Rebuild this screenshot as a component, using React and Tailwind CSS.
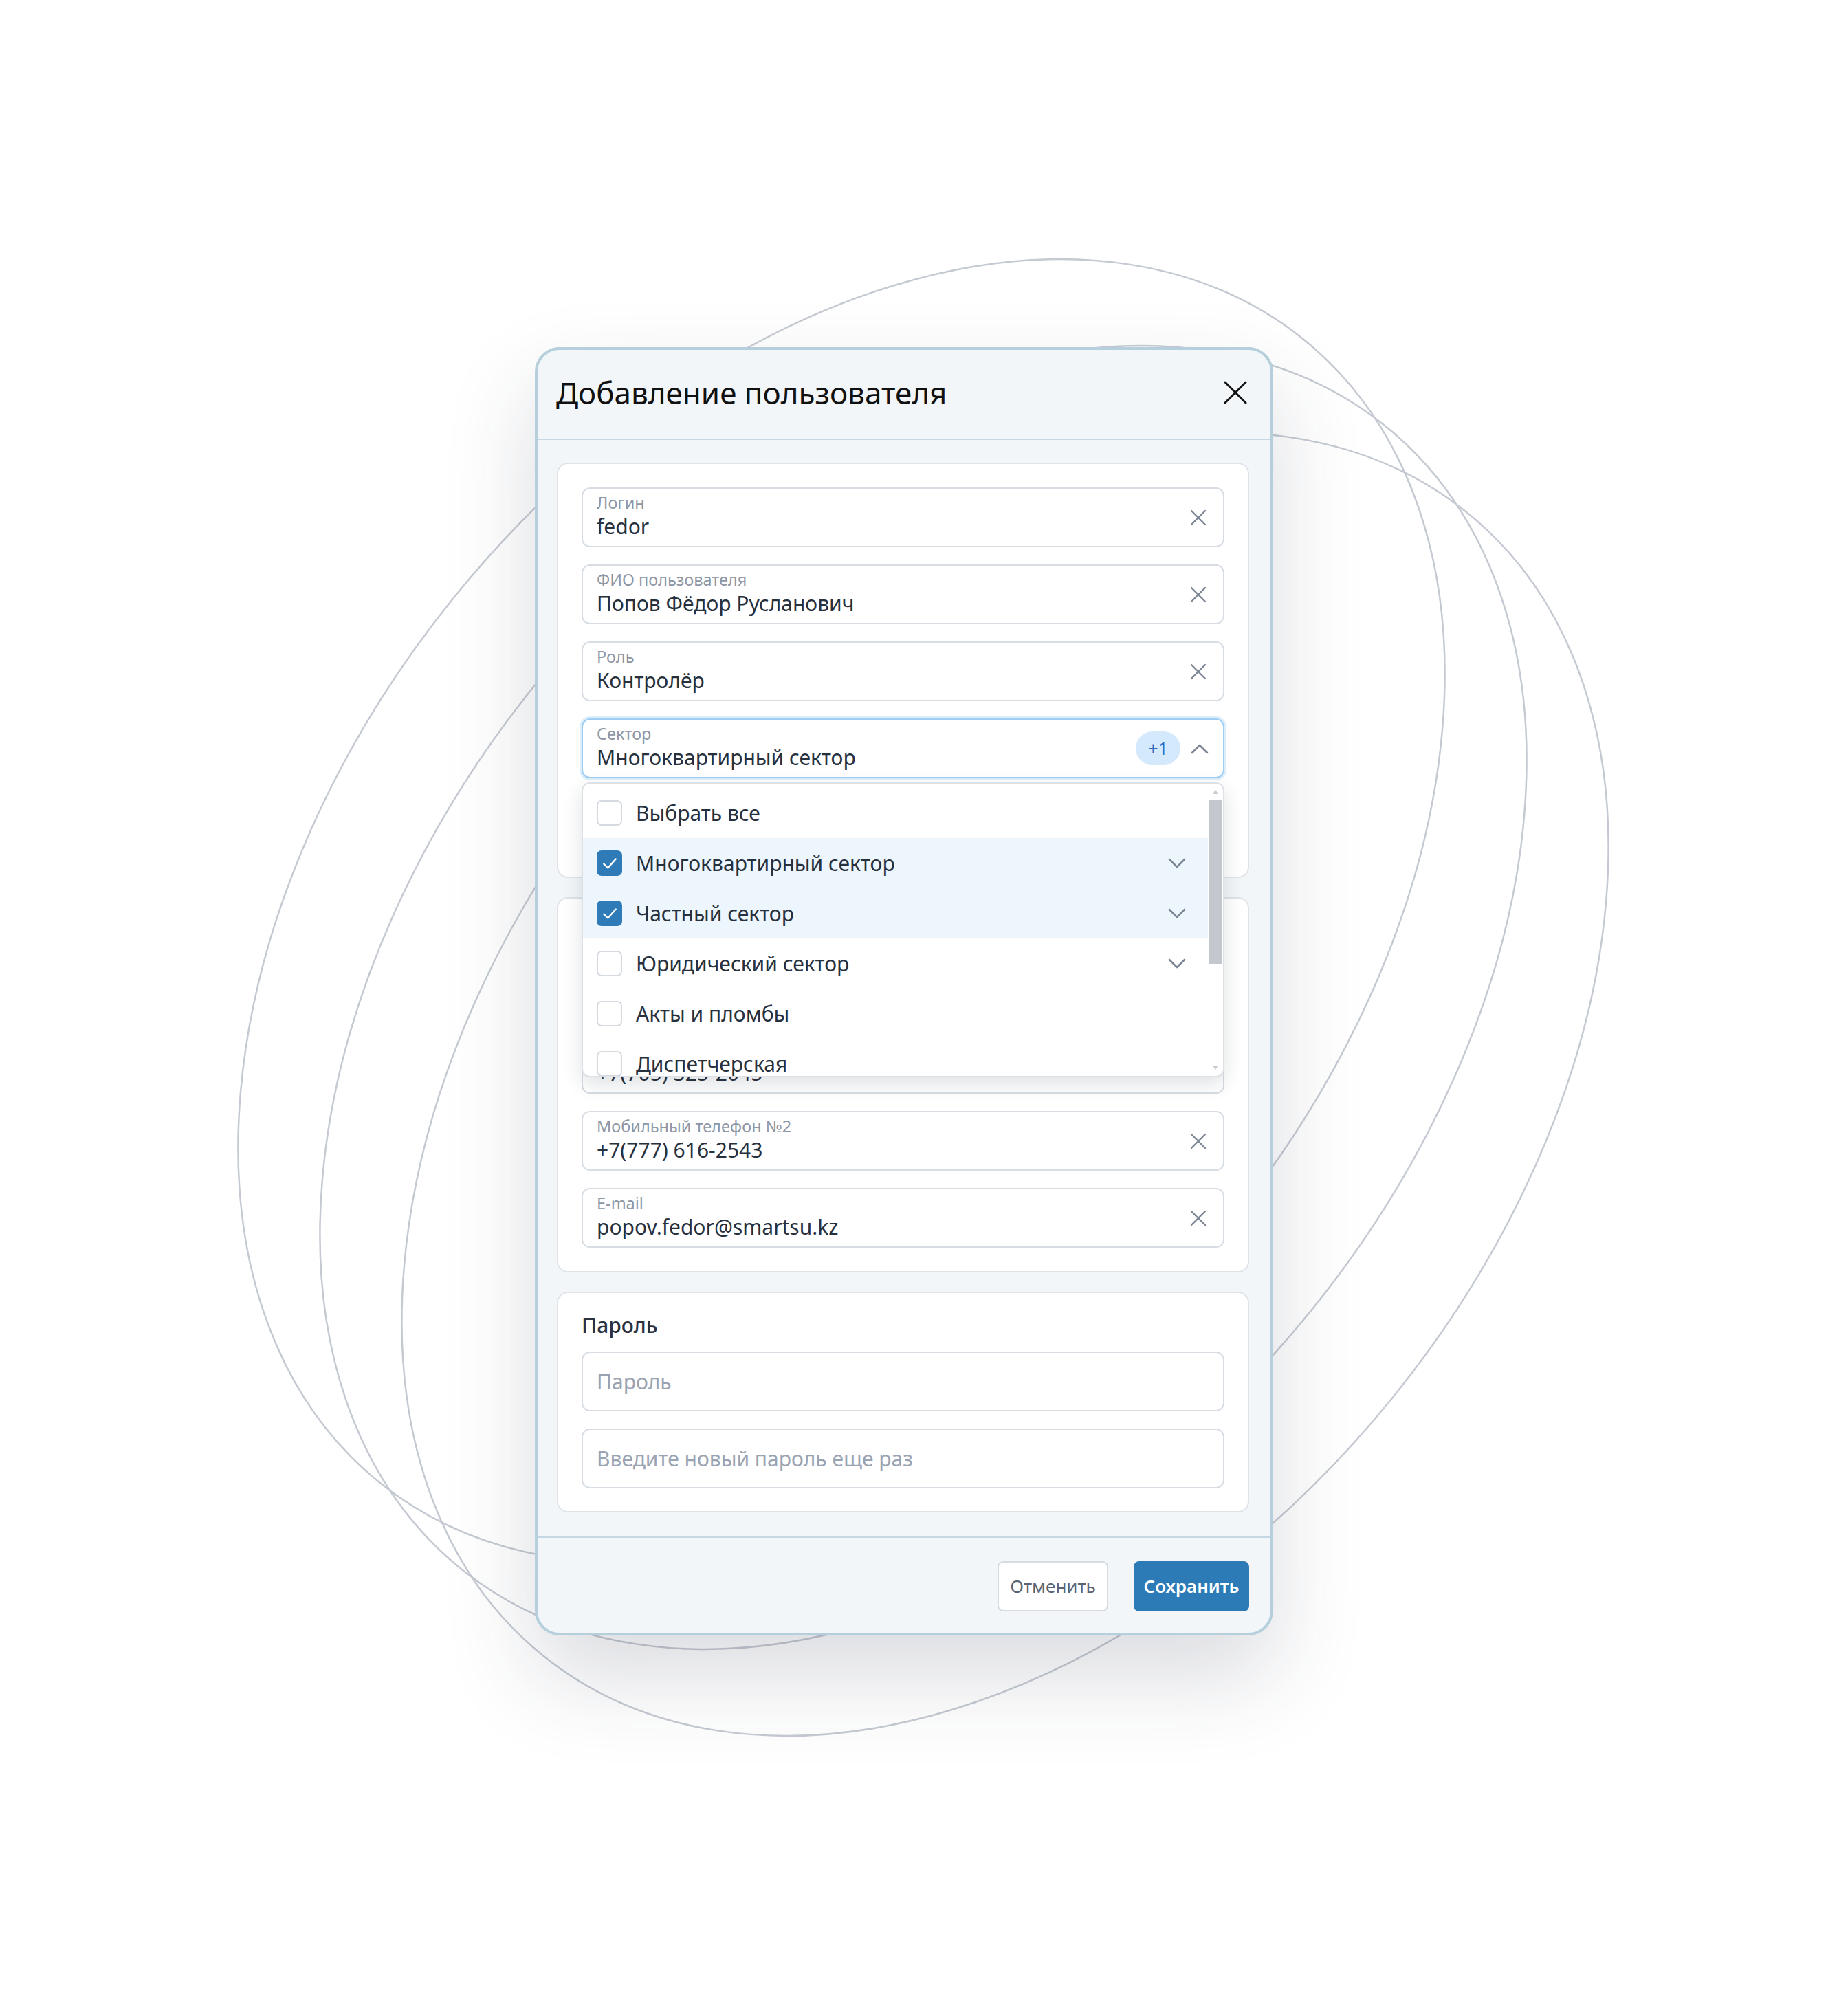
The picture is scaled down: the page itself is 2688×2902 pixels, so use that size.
import { useState } from 'react'

const ellipses = [
  [1224, 1325],
  [1343, 1451],
  [1462, 1577],
]

function ClearIcon() {
  return (
    <svg width="24" height="24" viewBox="0 0 24 24" fill="none" className="shrink-0">
      <path d="M2 2L22 22M22 2L2 22" stroke="#7d8696" strokeWidth="2.4" strokeLinecap="round" />
    </svg>
  )
}

function Chevron({ up = false }) {
  return (
    <svg width="26" height="16" viewBox="0 0 26 16" fill="none" className="shrink-0">
      <path
        d={up ? 'M2 14L13 3L24 14' : 'M2 2L13 13L24 2'}
        stroke="#7b8494"
        strokeWidth="2.6"
        strokeLinecap="round"
        strokeLinejoin="round"
      />
    </svg>
  )
}

function Field({ label, value, right }) {
  return (
    <div className="flex h-[87px] items-center rounded-[12px] border-2 border-[#d8dde3] bg-white pl-[20px] pr-[24px]">
      <div className="flex min-w-0 flex-1 flex-col self-start pt-[7px]">
        <span className="text-[23.5px] leading-[26px] text-[#8d96a5]">{label}</span>
        <span className="mt-[4px] whitespace-nowrap text-[30px] leading-[36px] text-[#27303d]">{value}</span>
      </div>
      {right ?? <ClearIcon />}
    </div>
  )
}

function Input({ placeholder }) {
  return (
    <div className="flex h-[87px] items-center rounded-[12px] border-2 border-[#d8dde3] bg-white px-[20px]">
      <span className="text-[30px] text-[#9aa3b1]">{placeholder}</span>
    </div>
  )
}

function Checkbox({ checked }) {
  if (checked) {
    return (
      <span className="flex h-[37px] w-[37px] shrink-0 items-center justify-center rounded-[7px] bg-[#2f7bb8]">
        <svg width="26" height="26" viewBox="0 0 24 24" fill="none">
          <path d="M4 12.5L9.5 18L20 6" stroke="white" strokeWidth="2.2" strokeLinecap="round" strokeLinejoin="round" />
        </svg>
      </span>
    )
  }
  return <span className="h-[37px] w-[37px] shrink-0 rounded-[7px] border-2 border-[#d5dae0] bg-white" />
}

const options = [
  { name: 'Выбрать все', checked: false, sub: false },
  { name: 'Многоквартирный сектор', checked: true, sub: true },
  { name: 'Частный сектор', checked: true, sub: true },
  { name: 'Юридический сектор', checked: false, sub: true },
  { name: 'Акты и пломбы', checked: false, sub: false },
  { name: 'Диспетчерская', checked: false, sub: false },
]

function SectorDropdown() {
  return (
    <div className="absolute left-0 right-0 top-[calc(100%+6px)] z-10 h-[429px] overflow-hidden rounded-[12px] border-2 border-[#dde1e6] bg-white shadow-[0_10px_28px_rgba(30,40,60,0.14)]">
      <div className="flex h-full">
        <div className="flex flex-1 flex-col pt-[6px]">
          {options.map((o) => (
            <div
              key={o.name}
              className={`flex h-[73px] shrink-0 items-center gap-[20px] pl-[20px] pr-[32px] ${o.checked ? 'bg-[#edf5fd]' : ''}`}
            >
              <Checkbox checked={o.checked} />
              <span className="flex-1 whitespace-nowrap text-[30px] text-[#27303d]">{o.name}</span>
              {o.sub && <Chevron />}
            </div>
          ))}
        </div>
        {/* scrollbar */}
        <div className="flex w-[22px] flex-col items-center pb-[8px] pt-[8px]">
          <svg width="10" height="8" viewBox="0 0 10 8"><path d="M5 1L9 7H1Z" fill="#c8ccd2" /></svg>
          <div className="mt-[8px] h-[238px] w-[20px] bg-[#c4c8ce]" />
          <div className="flex-1" />
          <svg width="10" height="8" viewBox="0 0 10 8"><path d="M1 1H9L5 7Z" fill="#c8ccd2" /></svg>
        </div>
      </div>
    </div>
  )
}

export default function App() {
  const [open] = useState(true)

  return (
    <div className="relative h-[2902px] w-[2688px] overflow-hidden bg-white font-['Noto_Sans',sans-serif]">
      <svg className="absolute inset-0" width="2688" height="2902" viewBox="0 0 2688 2902" fill="none">
        {ellipses.map(([cx, cy]) => (
          <ellipse
            key={cx}
            cx={cx}
            cy={cy}
            rx="1069"
            ry="725"
            transform={`rotate(-51 ${cx} ${cy})`}
            stroke="#c5cad2"
            strokeWidth="2.5"
          />
        ))}
      </svg>

      <div className="relative flex pl-[778px] pt-[505px]">
        <div className="w-[1074px] rounded-[36px] border-4 border-[#b6cfdc] bg-[#f2f6f9] shadow-[0_60px_130px_rgba(40,50,70,0.17)]">
          {/* Header */}
          <div className="flex h-[131px] items-center justify-between border-b-2 border-[#c5d8e3] pb-[6px] pl-[27px] pr-[34px]">
            <h2 className="whitespace-nowrap text-[44px] font-normal text-[#111111]">Добавление пользователя</h2>
            <svg width="34" height="34" viewBox="0 0 34 34" fill="none">
              <path d="M2 2L32 32M32 2L2 32" stroke="#111111" strokeWidth="3" strokeLinecap="round" />
            </svg>
          </div>

          {/* Body */}
          <div className="flex flex-col gap-[28px] border-b-2 border-[#c5d8e3] pb-[35px] pl-[28px] pr-[31px] pt-[33px]">
            <div className="flex flex-col gap-[25px] rounded-[16px] border-2 border-[#dfe3e8] bg-white px-[34px] pb-[31px] pt-[34px]">
              <Field label="Логин" value="fedor" />
              <Field label="ФИО пользователя" value="Попов Фёдор Русланович" />
              <Field label="Роль" value="Контролёр" />
              <div className="relative">
                <div className="flex h-[87px] items-center rounded-[12px] border-2 border-[#9fcdf3] bg-white pl-[20px] pr-[21px] shadow-[0_0_0_3px_rgba(159,205,243,0.35)]">
                  <div className="flex min-w-0 flex-1 flex-col self-start pt-[7px]">
                    <span className="text-[23.5px] leading-[26px] text-[#8d96a5]">Сектор</span>
                    <span className="mt-[4px] whitespace-nowrap text-[30px] leading-[36px] text-[#27303d]">Многоквартирный сектор</span>
                  </div>
                  <span className="flex h-[49px] w-[65px] items-center justify-center rounded-full bg-[#d5e9fc] text-[25px] text-[#2f6cc4]">
                    +1
                  </span>
                  <span className="ml-[15px]">
                    <Chevron up />
                  </span>
                </div>
                {open && <SectorDropdown />}
              </div>
              <Field label="Участок" value="Все участки" />
            </div>

            <div className="flex flex-col gap-[25px] rounded-[16px] border-2 border-[#dfe3e8] bg-white p-[34px]">
              <h3 className="text-[30px] font-medium leading-[26px] text-[#2a3240]">Контакты</h3>
              <Field label="Рабочий телефон" value="+7(727) 300-1020" />
              <Field label="Мобильный телефон №1" value="+7(705) 325-2045" />
              <Field label="Мобильный телефон №2" value="+7(777) 616-2543" />
              <Field label="E-mail" value="popov.fedor@smartsu.kz" />
            </div>

            <div className="flex flex-col gap-[25px] rounded-[16px] border-2 border-[#dfe3e8] bg-white px-[34px] pb-[33px] pt-[34px]">
              <h3 className="text-[30px] font-medium leading-[26px] text-[#2a3240]">Пароль</h3>
              <Input placeholder="Пароль" />
              <Input placeholder="Введите новый пароль еще раз" />
            </div>
          </div>

          {/* Footer */}
          <div className="flex justify-end gap-[37px] pb-[31px] pr-[31px] pt-[34px]">
            <button
              type="button"
              className="h-[73px] w-[161px] rounded-[8px] border-2 border-[#d7dce2] bg-white text-[26px] text-[#5a6472]"
            >
              Отменить
            </button>
            <button
              type="button"
              className="h-[73px] w-[168px] rounded-[8px] bg-[#2d7bb6] text-[26px] font-semibold text-white"
            >
              Сохранить
            </button>
          </div>
        </div>
      </div>
    </div>
  )
}
